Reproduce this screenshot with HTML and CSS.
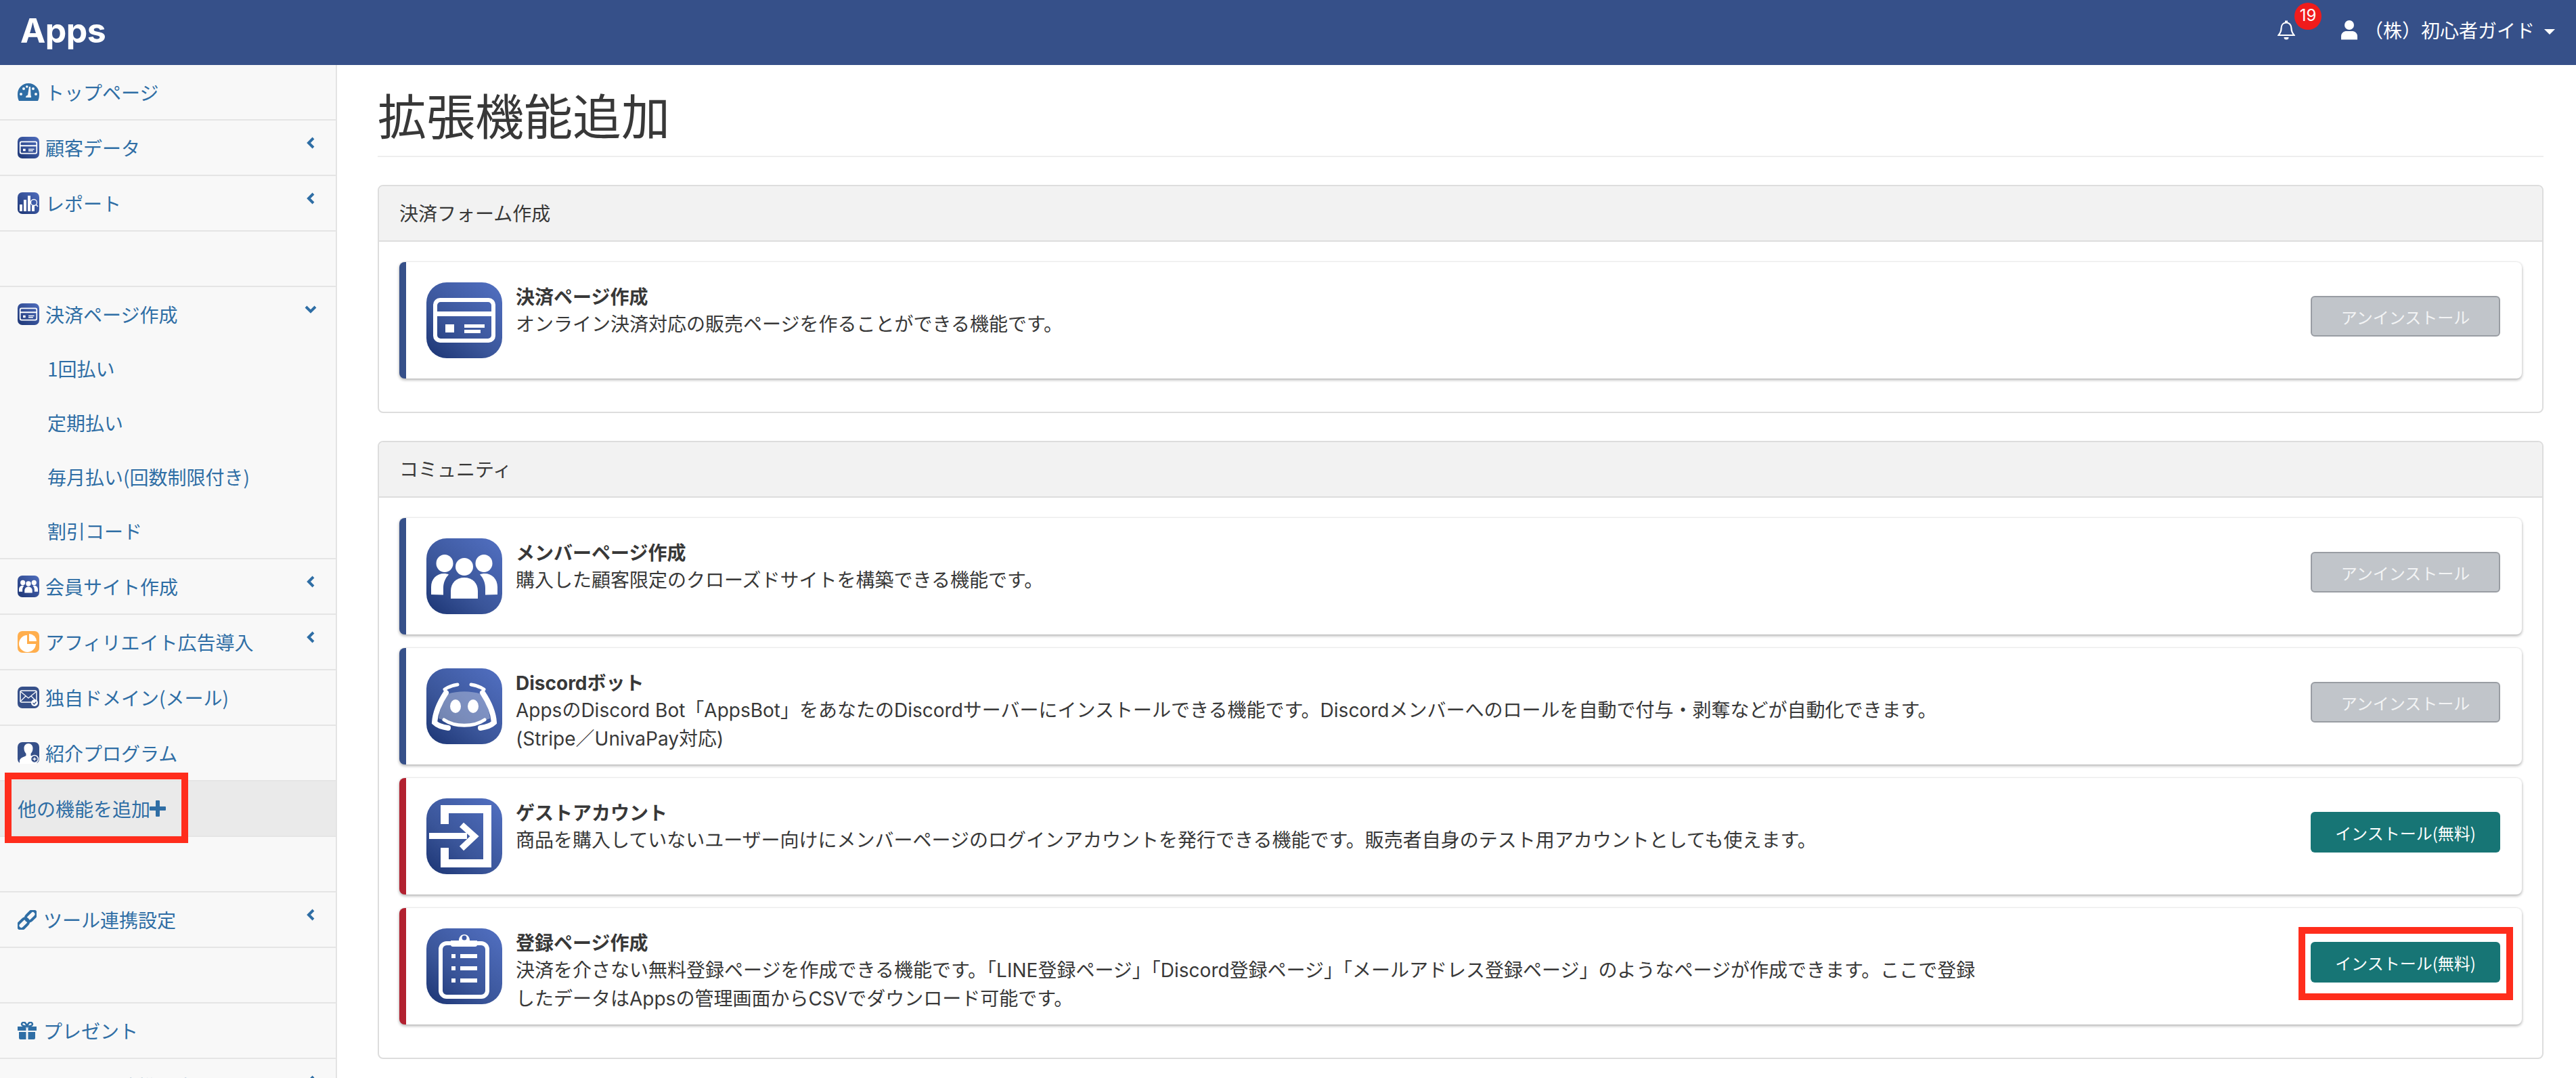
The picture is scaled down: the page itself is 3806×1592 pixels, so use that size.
FILE: index.html
```html
<!DOCTYPE html>
<html lang="ja">
<head>
<meta charset="utf-8">
<title>拡張機能追加</title>
<link rel="stylesheet" href="styles.css">
</head>
<body>
<svg class="defs" aria-hidden="true">
  <symbol id="i-card" viewBox="0 0 112 112">
    <path fill="#fff" fill-rule="evenodd" d="M20 23h72a10 10 0 0 1 10 10v46a10 10 0 0 1-10 10H20a10 10 0 0 1-10-10V33a10 10 0 0 1 10-10zm1 6a5 5 0 0 0-5 5v9h80v-9a5 5 0 0 0-5-5zM16 50v28a5 5 0 0 0 5 5h70a5 5 0 0 0 5-5V50z"/>
    <rect fill="#fff" x="28" y="62" width="13" height="12"/>
    <rect fill="#fff" x="56" y="62" width="30" height="5"/>
    <rect fill="#fff" x="56" y="70" width="24" height="5"/>
  </symbol>
  <symbol id="i-people" viewBox="0 0 112 112">
    <g fill="#fff">
      <ellipse cx="27" cy="37" rx="12.5" ry="13"/>
      <ellipse cx="85" cy="37" rx="12.5" ry="13"/>
      <ellipse cx="56" cy="42" rx="13" ry="13"/>
      <path d="M7 83V72c0-12 8-20 19-20 3 0 5 .5 7 1.500-5 5-8 12-8 20v10z"/>
      <path d="M105 83V72c0-12-8-20-19-20-3 0-5 .5-7 1.500 5 5 8 12 8 20v10z"/>
      <path d="M36 89V78c0-12 8-20 20-20s20 8 20 20v11z"/>
    </g>
  </symbol>
  <symbol id="i-discord" viewBox="0 0 112 112">
    <path fill="#fff" fill-opacity=".32" d="M18 74c2-15 7-28 13-36 16-5 34-5 50 0 6 8 11 21 13 36-6 2-10 4-12 6-14 5-38 5-52 0-2-2-6-4-12-6z"/>
    <g fill="none" stroke="#fff" stroke-linecap="round">
      <path stroke-width="8" d="M29 36C21 48 13 64 12 80c5 5 12 7 20 8"/>
      <path stroke-width="8" d="M83 36c8 12 16 28 17 44-5 5-12 7-20 8"/>
      <path stroke-width="5" d="M27 31c6-4 12-6 19-7"/>
      <path stroke-width="5" d="M85 31c-6-4-12-6-19-7"/>
      <path stroke-width="5" d="M26 76c16 11 44 11 60 0"/>
    </g>
    <ellipse fill="#fff" cx="43" cy="56" rx="8" ry="10"/>
    <ellipse fill="#fff" cx="69" cy="56" rx="8" ry="10"/>
  </symbol>
  <symbol id="i-login" viewBox="0 0 112 112">
    <path fill="#fff" d="M21 10h75v92H21V73h12v17h51V22H33v16H21z"/>
    <path fill="#fff" d="M4 51h56v9H4z"/>
    <path fill="none" stroke="#fff" stroke-width="9" d="M52 39l19 17-19 18"/>
  </symbol>
  <symbol id="i-clip" viewBox="0 0 112 112">
    <rect fill="none" stroke="#fff" stroke-width="6" x="21" y="22" width="69" height="79" rx="9"/>
    <path fill="#fff" d="M36 18h12c0-5 3-9 8-9s8 4 8 9h11v6a3 3 0 0 1-3 3H39a3 3 0 0 1-3-3z"/>
    <circle fill="#3f5ca8" cx="56" cy="14" r="3.500"/>
    <g fill="#fff">
      <rect x="37" y="38" width="6" height="6"/><rect x="50" y="38" width="25" height="6"/>
      <rect x="37" y="56" width="6" height="6"/><rect x="50" y="56" width="25" height="6"/>
      <rect x="37" y="74" width="6" height="6"/><rect x="50" y="74" width="25" height="6"/>
    </g>
  </symbol>
  <symbol id="i-report" viewBox="0 0 32 32">
    <g fill="#fff">
      <rect x="3" y="18" width="4" height="10"/><rect x="9" y="11" width="4" height="17"/>
      <rect x="15" y="5" width="4" height="23"/><rect x="21" y="20" width="4" height="8"/>
    </g>
    <circle cx="24" cy="15" r="4.500" fill="#3f5ca8" stroke="#fff" stroke-width="1.300"/>
    <path stroke="#fff" stroke-width="1.500" d="M27 18l3 3"/>
  </symbol>
  <symbol id="i-pie" viewBox="0 0 32 32">
    <path fill="#fff" d="M14 6v13h13a12.500 12.500 0 1 1-13-13z"/>
    <path fill="#fff" d="M17 4a11.500 11.500 0 0 1 11 11H17z"/>
  </symbol>
  <symbol id="i-mail" viewBox="0 0 32 32">
    <rect x="4" y="6" width="24" height="17" rx="2" fill="none" stroke="#fff" stroke-width="1.500"/>
    <path d="M4 7l12 10L28 7M4 22l8-8M28 22l-8-8" fill="none" stroke="#fff" stroke-width="1.300"/>
    <circle cx="25" cy="24" r="5" fill="#fff"/>
    <path d="M22.500 24l2 2 3-3.500" fill="none" stroke="#365089" stroke-width="1.300"/>
  </symbol>
  <symbol id="i-person" viewBox="0 0 32 32">
    <path fill="#fff" d="M16 2c4 0 6.500 3 6.500 7 0 3-1 6-3 8v3c3 1 8 2 9 6v6H3v-5c1-4 6-5 9.500-7v-3c-2-2-3-5-3-8 0-4 2.500-7 6.500-7z"/>
    <circle cx="25" cy="25" r="5.500" fill="#365089" stroke="#fff" stroke-width="1.500"/>
    <path d="M22.500 25h5M25 22.500v5" stroke="#fff" stroke-width="1.300"/>
  </symbol>
  <symbol id="i-chev-left" viewBox="0 0 12 18">
    <path d="M10 2L3 9l7 7" fill="none" stroke="#2f6ea5" stroke-width="4"/>
  </symbol>
  <symbol id="i-chev-down" viewBox="0 0 18 12">
    <path d="M2 2l7 7 7-7" fill="none" stroke="#2f6ea5" stroke-width="4"/>
  </symbol>
</svg>

<header class="topbar">
  <div class="logo">Apps</div>
  <div class="top-right">
    <div class="bell-wrap">
      <svg class="bell" viewBox="0 0 26 30"><path d="M13 4.500c-5 0-7.500 4-7.500 8.500 0 5-1.500 7-4 10h23c-2.500-3-4-5-4-10 0-4.500-2.500-8.500-7.500-8.500z" fill="none" stroke="#fff" stroke-width="2.200"/><path d="M11 1.500h4v3h-4z" fill="#fff"/><path d="M9.500 26h7a3.500 3.500 0 0 1-7 0z" fill="#fff"/></svg>
      <span class="badge">19</span>
    </div>
    <svg class="user" viewBox="0 0 24 29"><circle cx="12" cy="7.500" r="7" fill="#fff"/><path d="M0 29v-5c0-5 4-7.500 8-7.500h8c4 0 8 2.500 8 7.500v5z" fill="#fff"/></svg>
    <span class="user-name">（株）初心者ガイド</span>
    <span class="caret"></span>
  </div>
</header>

<div class="layout">
  <nav class="sidebar">
    <a class="nav-row">
      <svg class="fa-icon" viewBox="0 0 32 26"><path fill="#2f6ea5" d="M16 0C7 0 0 7 0 16c0 4 .5 7 2 10h28c1.500-3 2-6 2-10C32 7 25 0 16 0zM5 18a2 2 0 1 1 0-4 2 2 0 0 1 0 4zm4-8a2 2 0 1 1 0-4 2 2 0 0 1 0 4zm3-5a1.800 1.800 0 1 1 3.600 0A1.800 1.800 0 0 1 12 5zm8 16h-8c0-2 1-3 3-3.500L17 5h2l.5 13c1 .5.5 3 .5 3zm3-11a2 2 0 1 1 0-4 2 2 0 0 1 0 4zm4 8a2 2 0 1 1 0-4 2 2 0 0 1 0 4z"/></svg>
      <span class="nav-label">トップページ</span>
    </a>
    <a class="nav-row">
      <span class="app-mini"><svg><use href="#i-card"/></svg></span>
      <span class="nav-label">顧客データ</span>
      <svg class="chev"><use href="#i-chev-left"/></svg>
    </a>
    <a class="nav-row">
      <span class="app-mini"><svg><use href="#i-report"/></svg></span>
      <span class="nav-label">レポート</span>
      <svg class="chev"><use href="#i-chev-left"/></svg>
    </a>
    <div class="nav-row"></div>
    <div class="nav-group">
      <a class="nav-row nav-row-open">
        <span class="app-mini"><svg><use href="#i-card"/></svg></span>
        <span class="nav-label">決済ページ作成</span>
        <svg class="chev-down"><use href="#i-chev-down"/></svg>
      </a>
      <a class="sub-row">1回払い</a>
      <a class="sub-row">定期払い</a>
      <a class="sub-row">毎月払い(回数制限付き)</a>
      <a class="sub-row">割引コード</a>
    </div>
    <a class="nav-row">
      <span class="app-mini"><svg><use href="#i-people"/></svg></span>
      <span class="nav-label">会員サイト作成</span>
      <svg class="chev"><use href="#i-chev-left"/></svg>
    </a>
    <a class="nav-row">
      <span class="app-mini app-mini-orange"><svg><use href="#i-pie"/></svg></span>
      <span class="nav-label">アフィリエイト広告導入</span>
      <svg class="chev"><use href="#i-chev-left"/></svg>
    </a>
    <a class="nav-row">
      <span class="app-mini app-mini-flat"><svg><use href="#i-mail"/></svg></span>
      <span class="nav-label">独自ドメイン(メール)</span>
    </a>
    <a class="nav-row">
      <span class="app-mini app-mini-flat"><svg><use href="#i-person"/></svg></span>
      <span class="nav-label">紹介プログラム</span>
    </a>
    <a class="nav-row nav-row-active">
      <span class="add-label">他の機能を追加</span>
      <svg class="plus" viewBox="0 0 24 24"><path d="M9 1a1 1 0 0 1 1-1h4a1 1 0 0 1 1 1v8h8a1 1 0 0 1 1 1v4a1 1 0 0 1-1 1h-8v8a1 1 0 0 1-1 1h-4a1 1 0 0 1-1-1v-8H1a1 1 0 0 1-1-1v-4a1 1 0 0 1 1-1h8z" fill="#2f6ea5"/></svg>
      <span class="mark mark-side"></span>
    </a>
    <div class="nav-row"></div>
    <a class="nav-row">
      <svg class="fa-icon fa-wide fa-tall" viewBox="0 0 28 29"><g transform="rotate(-45 14 14.500)" fill="none" stroke="#2f6ea5" stroke-width="4"><rect x="-3" y="9.500" width="18" height="10" rx="5"/><rect x="13" y="9.500" width="18" height="10" rx="5"/></g></svg>
      <span class="nav-label nav-label-tight">ツール連携設定</span>
      <svg class="chev"><use href="#i-chev-left"/></svg>
    </a>
    <div class="nav-row"></div>
    <a class="nav-row">
      <svg class="fa-icon fa-wide" viewBox="0 0 28 26"><path fill="#2f6ea5" d="M0 7h12.500v6H0zM15.500 7H28v6H15.500zM2 15h10.500v11H4a2 2 0 0 1-2-2zM15.500 15H26v9a2 2 0 0 1-2 2h-8.500z"/><path fill="none" stroke="#2f6ea5" stroke-width="2.500" d="M14 6.500C11 6.500 6 6 6 3.500S9.500 0 11 1.500s3 5 3 5 1.500-3.500 3-5S22 1 22 3.500 17 6.500 14 6.500z"/></svg>
      <span class="nav-label nav-label-tight">プレゼント</span>
    </a>
    <a class="nav-row">
      <svg class="fa-icon fa-wide" viewBox="0 0 28 26"><circle cx="14" cy="13" r="12" fill="#2f6ea5"/></svg>
      <span class="nav-label nav-label-tight">ショップ連携設定</span>
      <svg class="chev"><use href="#i-chev-left"/></svg>
    </a>
  </nav>

  <main class="content">
    <h1 class="page-title">拡張機能追加</h1>

    <section class="panel">
      <div class="panel-head">決済フォーム作成</div>
      <div class="panel-body">
        <article class="card">
          <span class="app-icon"><svg><use href="#i-card"/></svg></span>
          <div class="card-text">
            <h2 class="card-title">決済ページ作成</h2>
            <p class="card-desc">オンライン決済対応の販売ページを作ることができる機能です。</p>
          </div>
          <button class="btn btn-off">アンインストール</button>
        </article>
      </div>
    </section>

    <section class="panel">
      <div class="panel-head">コミュニティ</div>
      <div class="panel-body">
        <article class="card">
          <span class="app-icon"><svg><use href="#i-people"/></svg></span>
          <div class="card-text">
            <h2 class="card-title">メンバーページ作成</h2>
            <p class="card-desc">購入した顧客限定のクローズドサイトを構築できる機能です。</p>
          </div>
          <button class="btn btn-off">アンインストール</button>
        </article>
        <article class="card">
          <span class="app-icon"><svg><use href="#i-discord"/></svg></span>
          <div class="card-text">
            <h2 class="card-title"><span class="lat">Discord</span>ボット</h2>
            <p class="card-desc"><span class="lat">Apps</span>の<span class="lat">Discord Bot</span>「<span class="lat">AppsBot</span>」をあなたの<span class="lat">Discord</span>サーバーにインストールできる機能です。<span class="lat">Discord</span>メンバーへのロールを自動で付与・剥奪などが自動化できます。<br><span class="lat">(Stripe</span>／<span class="lat">UnivaPay</span>対応<span class="lat">)</span></p>
          </div>
          <button class="btn btn-off">アンインストール</button>
        </article>
        <article class="card card-red">
          <span class="app-icon"><svg><use href="#i-login"/></svg></span>
          <div class="card-text">
            <h2 class="card-title">ゲストアカウント</h2>
            <p class="card-desc">商品を購入していないユーザー向けにメンバーページのログインアカウントを発行できる機能です。販売者自身のテスト用アカウントとしても使えます。</p>
          </div>
          <button class="btn btn-on">インストール(無料)</button>
        </article>
        <article class="card card-red">
          <span class="app-icon"><svg><use href="#i-clip"/></svg></span>
          <div class="card-text">
            <h2 class="card-title">登録ページ作成</h2>
            <p class="card-desc">決済を介さない無料登録ページを作成できる機能です。「<span class="lat">LINE</span>登録ページ」「<span class="lat">Discord</span>登録ページ」「メールアドレス登録ページ」のようなページが作成できます。ここで登録<br>したデータは<span class="lat">Apps</span>の管理画面から<span class="lat">CSV</span>でダウンロード可能です。</p>
          </div>
          <button class="btn btn-on">インストール(無料)</button>
          <span class="mark mark-btn"></span>
        </article>
      </div>
    </section>
  </main>
</div>
</body>
</html>
```
FILE: styles.css
```css
* { box-sizing: border-box; }
html, body { height: 100%; margin: 0; overflow: hidden; }
body {
  font-family: "Noto Sans CJK JP", "Noto Sans", sans-serif;
  font-size: 28px;
  color: #383838;
  background: #fff;
}
.lat { font-family: Inter, "Liberation Sans", sans-serif; }
.defs { width: 0; height: 0; display: block; }

.topbar {
  height: 96px;
  background: #365089;
  display: flex;
  align-items: flex-start;
  justify-content: space-between;
  padding: 0 31px 0 30px;
  color: #fff;
}
.logo {
  font-family: Inter, "Liberation Sans", sans-serif;
  font-weight: 700;
  font-size: 50px;
  line-height: 90px;
  letter-spacing: -0.5px;
}
.top-right { display: flex; align-items: center; height: 88px; }
.bell-wrap { position: relative; width: 26px; height: 30px; margin-right: 68px; }
.bell { width: 26px; height: 30px; display: block; }
.badge {
  position: absolute;
  left: 25px;
  top: -25px;
  width: 40px;
  height: 40px;
  border-radius: 50%;
  background: #f01c1c;
  font-family: Inter, sans-serif;
  font-size: 24px;
  line-height: 38px;
  text-align: center;
}
.user { width: 24px; height: 30px; margin-right: 10px; }
.user-name { font-size: 28px; line-height: 40px; }
.caret {
  width: 0;
  height: 0;
  margin-left: 14px;
  margin-top: 6px;
  border-left: 8px solid transparent;
  border-right: 8px solid transparent;
  border-top: 8px solid #fff;
}

.layout { display: flex; height: 1496px; }
.sidebar {
  width: 498px;
  flex: none;
  background: #f8f8f8;
  border-right: 2px solid #e4e4e4;
  overflow: hidden;
  color: #2f6ea5;
}
.nav-row {
  position: relative;
  height: 82px;
  display: flex;
  align-items: center;
  padding: 0 31px 0 26px;
  border-bottom: 2px solid #e5e5e5;
}
.nav-group { border-bottom: 2px solid #e5e5e5; }
.nav-row-open { height: 80px; border-bottom: 0; }
.nav-row-active { background: #eaeaea; }
.sub-row {
  display: flex;
  align-items: center;
  height: 80px;
  padding-left: 70px;
}
.nav-label { margin-left: 9px; font-size: 28px; line-height: 40px; white-space: nowrap; }
.nav-label-tight { margin-left: 10px; }
.add-label { font-size: 28px; line-height: 40px; white-space: nowrap; }
.plus { width: 24px; height: 24px; flex: none; margin-left: -1px; }
.app-mini {
  width: 32px;
  height: 32px;
  flex: none;
  border-radius: 7px;
  background: linear-gradient(45deg, #1d3674, #4f6dbd);
  display: block;
}
.app-mini svg { width: 32px; height: 32px; display: block; }
.app-mini-orange { background: #ffae4d; }
.app-mini-flat { background: #365089; }
.fa-icon { width: 32px; height: 26px; flex: none; }
.fa-wide { width: 28px; }
.fa-tall { height: 29px; }
.chev { width: 12px; height: 18px; margin: -14px 0 0 auto; flex: none; }
.chev-down { width: 18px; height: 12px; margin: -14px -3px 0 auto; flex: none; }

.content { flex: 1; padding: 0 48px 0 60px; min-width: 0; }
.page-title {
  margin: 0;
  height: 136px;
  padding-top: 22px;
  font-size: 72px;
  line-height: 100px;
  font-weight: 400;
  border-bottom: 2px solid #eee;
}
.panel {
  margin-top: 41px;
  border: 2px solid #ddd;
  border-radius: 8px;
  overflow: hidden;
}
.panel-head {
  height: 84px;
  padding-left: 30px;
  background: #f2f2f2;
  border-bottom: 2px solid #ddd;
  display: flex;
  align-items: center;
  margin-top: -2px;
}
.panel-body {
  padding: 30px 30px 49px;
  display: flex;
  flex-direction: column;
  gap: 20px;
}
.card {
  position: relative;
  height: 172px;
  display: flex;
  align-items: flex-start;
  padding: 30px 32px 30px 30px;
  background: #fff;
  border-left: 10px solid #365089;
  border-radius: 8px;
  box-shadow: 0 2px 4px rgba(0, 0, 0, .32), 0 -1px 2px rgba(0, 0, 0, .05);
}
.card-red { border-left-color: #b22130; }
.app-icon {
  width: 112px;
  height: 112px;
  flex: none;
  border-radius: 30px;
  background: linear-gradient(40deg, #1b3473 0%, #3a5599 40%, #5270c2 100%);
}
.app-icon svg { width: 112px; height: 112px; display: block; }
.card-text { flex: 1; padding-left: 20px; min-width: 0; }
.card-title {
  margin: 0;
  height: 40px;
  font-size: 28px;
  line-height: 40px;
  font-weight: 700;
}
.card-desc { margin: 0; font-size: 28px; line-height: 40px; white-space: nowrap; }
.btn {
  width: 280px;
  height: 60px;
  flex: none;
  margin-top: 20px;
  border-radius: 6px;
  font-family: inherit;
  font-size: 24px;
  padding: 0;
  color: #fff;
}
.btn-off { background: #c1c5ca; border: 2px solid #999da3; color: #f3f4f5; }
.btn-on { background: #177575; border: 0; }

.mark { position: absolute; border: 10px solid #ff2d1c; pointer-events: none; }
.mark-side { left: 7px; top: -13px; width: 271px; height: 104px; }
.mark-btn { right: 13px; top: 28px; width: 317px; height: 108px; }
```
